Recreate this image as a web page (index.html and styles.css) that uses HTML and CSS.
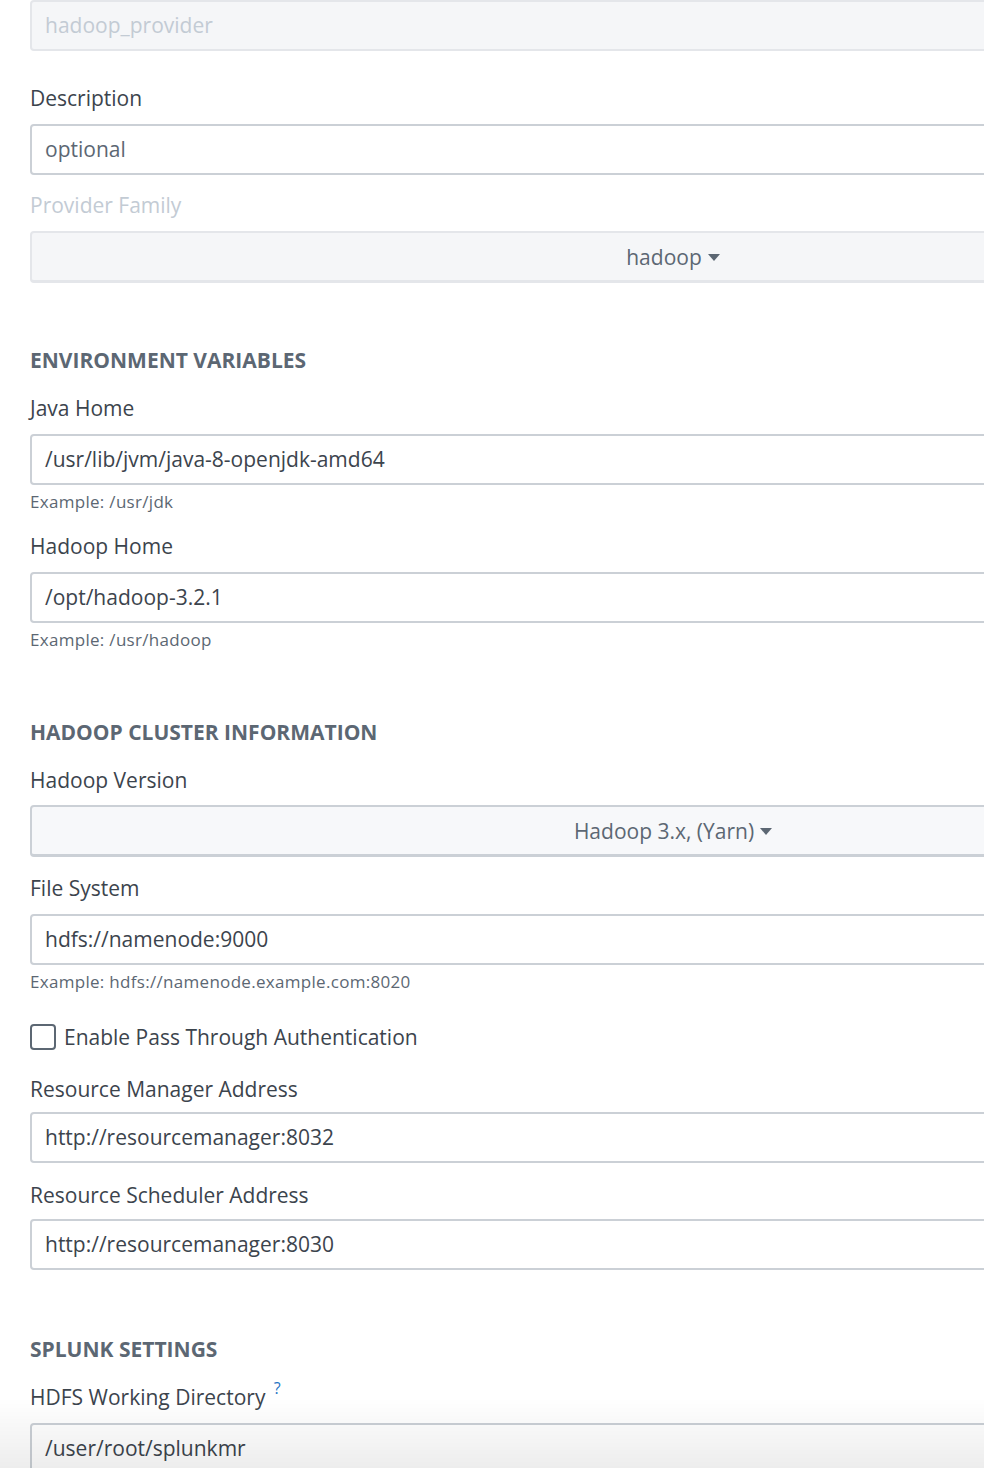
FILE: index.html
```html
<!DOCTYPE html>
<html>
<head>
<meta charset="utf-8">
<link rel="stylesheet" href="styles.css">
</head>
<body>
<div class="page">
  <form class="form">
    <div class="field field-first">
      <div class="input input-disabled">hadoop_provider</div>
    </div>

    <div class="field field-desc">
      <div class="label">Description</div>
      <div class="input input-placeholder">optional</div>
    </div>

    <div class="field">
      <div class="label label-disabled">Provider Family</div>
      <div class="select select-disabled"><span>hadoop</span><span class="caret"></span></div>
    </div>

    <h2 class="section">ENVIRONMENT VARIABLES</h2>

    <div class="field field-help">
      <div class="label">Java Home</div>
      <div class="input">/usr/lib/jvm/java-8-openjdk-amd64</div>
      <div class="help">Example: /usr/jdk</div>
    </div>

    <div class="field field-help">
      <div class="label">Hadoop Home</div>
      <div class="input">/opt/hadoop-3.2.1</div>
      <div class="help">Example: /usr/hadoop</div>
    </div>

    <h2 class="section section-after-help">HADOOP CLUSTER INFORMATION</h2>

    <div class="field">
      <div class="label label-tight">Hadoop Version</div>
      <div class="select"><span>Hadoop 3.x, (Yarn)</span><span class="caret"></span></div>
    </div>

    <div class="field field-help">
      <div class="label">File System</div>
      <div class="input">hdfs://namenode:9000</div>
      <div class="help">Example: hdfs://namenode.example.com:8020</div>
    </div>

    <div class="field checkbox-row">
      <span class="checkbox"></span>
      <span class="checkbox-label">Enable Pass Through Authentication</span>
    </div>

    <div class="field field-rm">
      <div class="label label-rm">Resource Manager Address</div>
      <div class="input">http://resourcemanager:8032</div>
    </div>

    <div class="field">
      <div class="label label-rs">Resource Scheduler Address</div>
      <div class="input">http://resourcemanager:8030</div>
    </div>

    <h2 class="section section-splunk">SPLUNK SETTINGS</h2>

    <div class="field">
      <div class="label">HDFS Working Directory <sup class="tip">?</sup></div>
      <div class="input">/user/root/splunkmr</div>
    </div>
  </form>
</div>
<div class="fade"></div>
</body>
</html>
```

FILE: styles.css
```css
html, body {
  margin: 0;
  padding: 0;
  background: #ffffff;
  overflow: hidden;
}

body {
  font-family: "Open Sans", Roboto, "Liberation Sans", sans-serif;
  color: #3c444d;
  height: 1468px;
}

.page {
  width: 1400px;
  padding-left: 30px;
}

.form {
  width: 1286px;
  margin: 0;
}

.field {
  margin-bottom: 19px;
}

.field-first {
  margin-bottom: 35px;
}

.field-desc {
  margin-bottom: 18px;
}

.field-help {
  margin-bottom: 22px;
}

.field-rm {
  margin-bottom: 20px;
}

.label {
  font-size: 21px;
  line-height: 24px;
  color: #3c444d;
  margin-bottom: 14px;
}

.label-disabled {
  color: #c3cbd4;
  margin-bottom: 14px;
}

.label-tight {
  margin-bottom: 13px;
}

.label-rm {
  margin-bottom: 11px;
}

.label-rs {
  margin-bottom: 12px;
}

.input {
  box-sizing: border-box;
  height: 51px;
  border: 2px solid #cbd0d6;
  border-radius: 4px;
  padding: 0 0 0 13px;
  font-size: 21px;
  line-height: 47px;
  color: #3c444d;
  background: #ffffff;
}

.input-disabled {
  background: #f5f6f8;
  border-color: #e4e6ea;
  color: #c3cbd4;
}

.input-placeholder {
  color: #5c6773;
}

.help {
  font-size: 17px;
  line-height: 20px;
  letter-spacing: 0.3px;
  color: #5c6773;
  margin-top: 7px;
}

.select {
  box-sizing: border-box;
  height: 52px;
  border: 2px solid #cbd0d6;
  border-bottom-width: 3px;
  border-radius: 4px;
  background: #f7f8fa;
  display: flex;
  align-items: center;
  justify-content: center;
  gap: 6px;
  font-size: 21px;
  color: #5c6773;
}

.select-disabled {
  border-color: #e4e6ea;
  background: #f5f6f8;
}

.caret {
  width: 0;
  height: 0;
  border-left: 6px solid transparent;
  border-right: 6px solid transparent;
  border-top: 7px solid #5c6773;
  margin-top: 2px;
}

.section {
  font-size: 21px;
  line-height: 24px;
  font-weight: 700;
  color: #5c6773;
  margin: 65px 0 24px 0;
  letter-spacing: 0;
}

.section-after-help {
  margin-top: 70px;
}

.section-splunk {
  margin-top: 67px;
}

.checkbox-row {
  display: flex;
  align-items: center;
  gap: 8px;
  height: 26px;
  margin-top: 32px;
  margin-bottom: 27px;
}

.checkbox {
  box-sizing: border-box;
  width: 26px;
  height: 26px;
  border: 2px solid #5c6773;
  border-radius: 4px;
  background: #ffffff;
}

.checkbox-label {
  font-size: 21px;
  color: #3c444d;
}

.tip {
  font-size: 16px;
  color: #1f74c4;
  vertical-align: top;
  position: relative;
  top: -9px;
  margin-left: 3px;
}

.fade {
  position: fixed;
  left: 0;
  right: 0;
  bottom: 0;
  height: 70px;
  background: linear-gradient(to bottom, rgba(0, 0, 0, 0), rgba(0, 0, 0, 0.07));
  pointer-events: none;
}
```
